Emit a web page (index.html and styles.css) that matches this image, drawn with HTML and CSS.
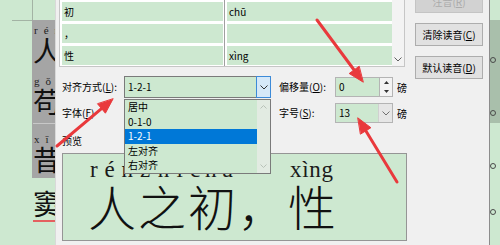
FILE: index.html
```html
<!DOCTYPE html>
<html lang="zh-CN">
<head>
<meta charset="utf-8">
<title>拼音指南</title>
<link rel="stylesheet" href="styles.css">
</head>
<body>
<div class="screen">
  <div class="doc">
    <div class="doc-margin"><div class="corner"></div></div>
    <div class="doc-text">
      <div class="sel">
        <div class="ln l1"><div class="py">rén</div><div class="hz">人</div></div>
        <div class="ln l2"><div class="py">gǒu</div><div class="hz">苟</div></div>
        <div class="sep"></div>
        <div class="ln l3"><div class="py">xī</div><div class="hz">昔</div></div>
      </div>
      <div class="ln l4"><div class="hz err">窦</div></div>
    </div>
    <div class="doc-right">
      <div class="sel2"></div>
      <span class="handle h1"></span>
      <span class="handle h2"></span>
      <span class="handle h3"></span>
      <span class="handle h4"></span>
    </div>
  </div>

  <div class="dialog">
    <div class="main">
      <div class="listview">
        <div class="cols">
          <div class="col col-l">
            <div class="cell">初</div>
            <div class="cell">，</div>
            <div class="cell">性</div>
          </div>
          <div class="col col-r">
            <div class="cell">chū</div>
            <div class="cell"></div>
            <div class="cell">xìng</div>
          </div>
        </div>
        <div class="vscroll">
          <svg width="8" height="5" viewBox="0 0 8 5"><path d="M0.5 0.5 L4 4 L7.5 0.5" fill="none" stroke="#606060" stroke-width="1"/></svg>
        </div>
      </div>

      <div class="form">
        <label class="lbl">对齐方式(<u>L</u>):</label>
        <div class="combo align">
          <span class="val">1-2-1</span>
          <span class="drop"><svg width="8" height="5" viewBox="0 0 8 5"><path d="M0.5 0.5 L4 4 L7.5 0.5" fill="none" stroke="#333" stroke-width="1"/></svg></span>
          <div class="dropdown">
            <div class="items">
              <div class="item">居中</div>
              <div class="item">0-1-0</div>
              <div class="item picked">1-2-1</div>
              <div class="item">左对齐</div>
              <div class="item">右对齐</div>
            </div>
            <div class="lscroll">
              <svg width="7" height="4" viewBox="0 0 7 4"><path d="M0.5 3.5 L3.5 0.5 L6.5 3.5" fill="none" stroke="#b8c2b8" stroke-width="1"/></svg>
              <svg width="7" height="4" viewBox="0 0 7 4"><path d="M0.5 0.5 L3.5 3.5 L6.5 0.5" fill="none" stroke="#b8c2b8" stroke-width="1"/></svg>
            </div>
          </div>
        </div>
        <label class="lbl lbl-r">偏移量(<u>O</u>):</label>
        <div class="spin">
          <span class="inp">0</span>
          <span class="btns">
            <span><svg width="5" height="3" viewBox="0 0 5 3"><path d="M0 3 L2.5 0 L5 3Z" fill="#333"/></svg></span>
            <span><svg width="5" height="3" viewBox="0 0 5 3"><path d="M0 0 L2.5 3 L5 0Z" fill="#333"/></svg></span>
          </span>
        </div>
        <span class="unit">磅</span>

        <label class="lbl">字体(<u>F</u>)</label>
        <div class="blank"></div>
        <label class="lbl lbl-r">字号(<u>S</u>):</label>
        <div class="combo size">
          <span class="val">13</span>
          <span class="drop"><svg width="8" height="5" viewBox="0 0 8 5"><path d="M0.5 0.5 L4 4 L7.5 0.5" fill="none" stroke="#707070" stroke-width="1"/></svg></span>
        </div>
        <span class="unit">磅</span>
      </div>

      <div class="pv-label">预览</div>
      <div class="preview">
        <div class="pv-py">
          <span class="syl"><span>r</span><span>é</span><span>n</span></span>
          <span class="syl"><span>z</span><span>h</span><span>ī</span></span>
          <span class="syl"><span>c</span><span>h</span><span>ū</span></span>
          <span class="syl"></span>
          <span class="syl"><span>x</span><span>ì</span><span>n</span><span>g</span></span>
        </div>
        <div class="pv-hz"><span>人</span><span>之</span><span>初</span><span>，</span><span>性</span></div>
      </div>
    </div>

    <div class="side">
      <div class="btn off">注音(<u>R</u>)</div>
      <div class="btn">清除读音(<u>C</u>)</div>
      <div class="btn">默认读音(<u>D</u>)</div>
    </div>
  </div>

  <svg class="arrows" width="500" height="245" viewBox="0 0 500 245">
    <g fill="#e9393c" stroke="#e9393c" stroke-linecap="round" stroke-linejoin="round">
      <line x1="317" y1="20" x2="354.5" y2="70.5" stroke-width="3"/>
      <polygon points="363,82 349.2,73.5 358.9,66.4" stroke-width="1"/>
      <line x1="397" y1="182" x2="365.8" y2="130.8" stroke-width="3"/>
      <polygon points="358,118 370.9,127.7 360.7,134" stroke-width="1"/>
      <line x1="57" y1="146" x2="101.5" y2="108.6" stroke-width="3"/>
      <polygon points="113,99 105.4,113.2 97.7,104" stroke-width="1"/>
    </g>
  </svg>
</div>
</body>
</html>
```

FILE: styles.css
```css
* { box-sizing: border-box; margin: 0; padding: 0; }
html, body { width: 500px; height: 245px; overflow: hidden; }
body {
  font-family: "Noto Sans CJK SC", "Noto Sans", sans-serif;
  font-size: 10px;
  color: #000;
  background: #cde8d0;
}
.screen { position: relative; width: 500px; height: 245px; overflow: hidden; background: #cde8d0; }

/* document behind the dialog */
.doc { display: flex; height: 245px; }
.doc-margin { width: 32px; flex: none; }
.corner { margin-left: 12px; width: 21px; height: 21px; border-right: 1px solid #a3b3a4; border-bottom: 1px solid #a3b3a4; }
.doc-text { width: 40px; flex: none; padding-top: 20px; }
.sel { height: 158px; background: #a5a5a5; padding-left: 1px; overflow: hidden; }
.ln { display: flex; flex-direction: column; }
.py { font-family: "Liberation Serif", serif; font-size: 11px; line-height: 10px; height: 10px; letter-spacing: 6px; color: #222; padding-left: 1px; white-space: nowrap; }
.hz { font-size: 28px; line-height: 28px; height: 28px; margin-top: 1px; color: #111; white-space: nowrap; }
.l1 { margin-top: 5px; }
.l2 { margin-top: 12px; }
.sep { height: 1px; background: #c8c8c8; margin-top: 8px; }
.l3 { margin-top: 10px; }
.l4 { margin-top: 10px; padding-left: 1px; }
.err { height: 33px; padding-bottom: 3px; border-bottom: 2px solid #e46060; }
.doc-right { margin-left: auto; width: 10px; flex: none; position: relative; padding-top: 20px; }
.sel2 { height: 103px; background: #a9bfab; }
.handle { position: absolute; left: 0; width: 6px; height: 6px; border: 1px solid #4a4a4a; border-radius: 50%; }
.h1 { top: 57px; } .h2 { top: 110px; } .h3 { top: 163px; } .h4 { top: 209px; }

/* dialog */
.dialog {
  position: absolute; left: 55px; top: 0; width: 435px; height: 245px;
  background: #f0f0f0; border-left: 1px solid #d9d9d9; border-right: 1px solid #8c8c8c;
  display: flex; align-items: flex-start;
}
.main { margin-left: 3px; width: 348px; flex: none; }
.side { margin-left: 8px; width: 68px; flex: none; display: flex; flex-direction: column; gap: 10px; margin-top: -10px; }
.btn { height: 23px; border: 1px solid #adadad; background: #e1e1e1; text-align: center; line-height: 21px; white-space: nowrap; }
.btn.off { background: #d2d2d2; border-color: #c4c4c4; color: #ababab; }

.listview { width: 346px; height: 67px; background: #fff; border: 1px solid #c6c6c6; border-top: 0; display: flex; }
.cols { display: flex; padding-left: 2px; flex: 1; }
.col { padding-top: 2px; display: flex; flex-direction: column; gap: 3px; }
.col-l { width: 163px; border-right: 1px solid #a0a0a0; padding-right: 1px; }
.col-r { width: 165px; margin-left: 2px; }
.cell { height: 19px; background: #cde8d0; line-height: 19px; padding-left: 2px; white-space: nowrap; }
.vscroll { width: 12px; background: #f3f3f3; display: flex; flex-direction: column; justify-content: flex-end; align-items: center; padding-bottom: 4px; }

.form {
  display: grid; grid-template-columns: 62px 147px 64px 58px auto; grid-template-rows: 22px 20px;
  row-gap: 5px; margin-top: 9px; margin-left: 3px; align-items: center;
}
.lbl { white-space: nowrap; line-height: 14px; }
.lbl-r { padding-left: 8px; }
.unit { padding-left: 4px; white-space: nowrap; }
.combo { position: relative; display: flex; height: 100%; border: 1px solid #7a7a7a; background: #cde8d0; }
.combo .val { flex: 1; padding-left: 3px; line-height: 20px; }
.size .val { line-height: 18px; }
.drop { width: 14px; display: flex; align-items: center; justify-content: center; }
.align .drop { margin: -1px -1px -1px 0; width: 15px; background: #d5e8f8; border: 1px solid #3c8ad8; }
.size { border-color: #b4b4b4; }
.size .drop { background: #e6e6e6; border-left: 1px solid #d0d0d0; }

.dropdown { position: absolute; left: -1px; top: calc(100% + 2px); width: 147px; border: 1px solid #7a7a7a; background: #cde8d0; display: flex; z-index: 3; }
.items { flex: 1; }
.item { height: 14.5px; line-height: 14.5px; padding-left: 3px; white-space: nowrap; }
.item.picked { background: #0078d7; color: #fff; }
.lscroll { width: 13px; background: #e2ebe2; display: flex; flex-direction: column; justify-content: space-between; align-items: center; padding: 5px 0; }

.spin { display: flex; height: 20px; }
.spin .inp { flex: 1; border: 1px solid #b4b4b4; background: #cde8d0; padding-left: 3px; line-height: 18px; }
.spin .btns { width: 13px; display: flex; flex-direction: column; border: 1px solid #b4b4b4; border-left: 0; background: #f3f3f3; }
.spin .btns span { flex: 1; display: flex; align-items: center; justify-content: center; }

.pv-label { margin-top: 11px; margin-left: 3px; line-height: 14px; }
.preview { margin-top: 5px; margin-left: 3px; width: 345px; height: 88px; background: #cde8d0; border: 1px solid #959595; padding-left: 24px; overflow: hidden; }
.pv-py { display: flex; height: 23px; margin-top: 4px; }
.syl { width: 50px; padding: 0 4px 0 3px; display: flex; justify-content: space-between; font-family: "Liberation Serif", serif; font-size: 23px; line-height: 23px; color: #1a1a1a; }
.pv-hz { display: flex; height: 50px; }
.pv-hz span { width: 50px; text-align: center; font-size: 48px; line-height: 48px; font-weight: 300; color: #111; }

.arrows { position: absolute; left: 0; top: 0; pointer-events: none; }
```
